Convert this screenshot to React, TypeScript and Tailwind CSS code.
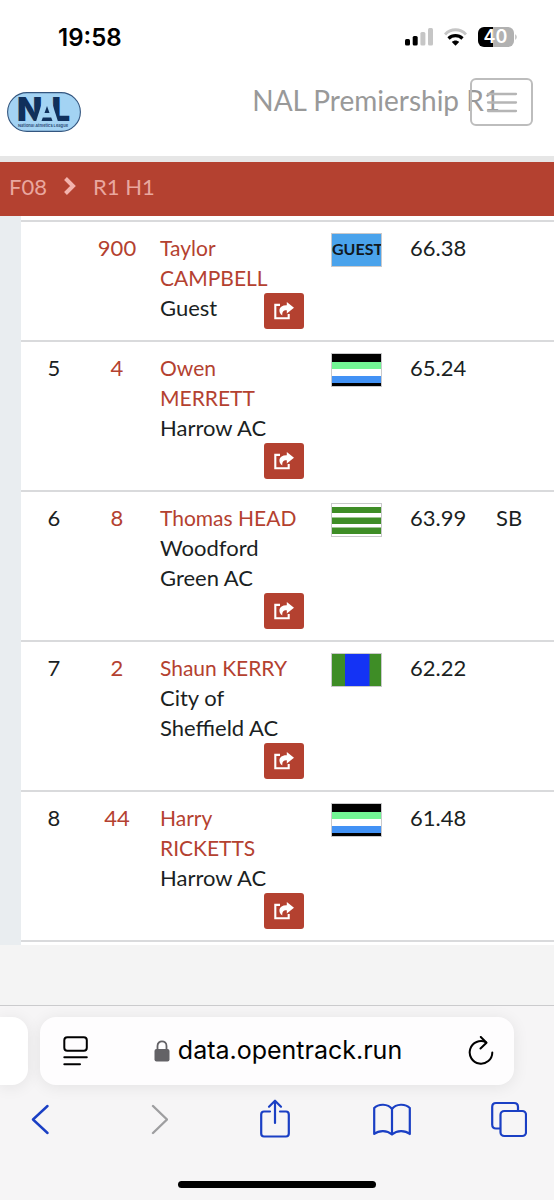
import React from "react";

type Athlete = {
  pos: string;
  bib: string;
  name: string[];
  club: string[];
  flag: "guest" | "harrow" | "woodford" | "sheffield";
  result: string;
  note?: string;
};

const athletes: Athlete[] = [
  { pos: "", bib: "900", name: ["Taylor", "CAMPBELL"], club: ["Guest"], flag: "guest", result: "66.38" },
  { pos: "5", bib: "4", name: ["Owen", "MERRETT"], club: ["Harrow AC"], flag: "harrow", result: "65.24" },
  { pos: "6", bib: "8", name: ["Thomas HEAD"], club: ["Woodford", "Green AC"], flag: "woodford", result: "63.99", note: "SB" },
  { pos: "7", bib: "2", name: ["Shaun KERRY"], club: ["City of", "Sheffield AC"], flag: "sheffield", result: "62.22" },
  { pos: "8", bib: "44", name: ["Harry", "RICKETTS"], club: ["Harrow AC"], flag: "harrow", result: "61.48" },
];

function Logo() {
  return (
    <svg className="block overflow-visible" width="74" height="40" viewBox="0 0 74 40" role="img" aria-label="National Athletics League">
      <rect x="0.6" y="0.6" width="72.8" height="38.8" rx="19.4" fill="#a3d3f3" stroke="#34567f" strokeWidth="1.1" />
      <g fontFamily="Inter, sans-serif" fontWeight="900" fontSize="33" fill="#10305c">
        <text x="10" y="29">N</text>
        <text x="44.500" y="29">L</text>
      </g>
      <path d="M37 4.500H43L51 29.500H29Z" fill="#a3d3f3" />
      <path d="M40 14 42.500 21H37.500ZM35.800 25.500H44.200L45.500 29H34.500Z" fill="#10305c" />
      <text x="11" y="34.500" fontFamily="Inter, sans-serif" fontWeight="700" fontSize="4" fill="#34567f">National Athletics League</text>
    </svg>
  );
}

function Flag({ kind }: { kind: Athlete["flag"] }) {
  return (
    <svg className="block" width="51" height="34" viewBox="0 0 51 34" role="img" aria-label={kind + " colours"}>
      {kind === "guest" && (
        <>
          <rect width="51" height="34" fill="#4aa3ec" />
          <text x="1" y="21.500" fontFamily="Lato, sans-serif" fontWeight="700" fontSize="16" fill="#111820">GUEST</text>
        </>
      )}
      {kind === "harrow" && (
        <>
          <rect width="51" height="34" fill="#000" />
          <rect y="9" width="51" height="7" fill="#72f594" />
          <rect y="16" width="51" height="7" fill="#fff" />
          <rect y="23" width="51" height="7" fill="#4292f5" />
        </>
      )}
      {kind === "woodford" && (
        <>
          <rect width="51" height="34" fill="#fff" />
          <path d="M0 4h51v6H0zM0 14.500h51v6.500H0zM0 24.500h51v6.500H0z" fill="#3e8d26" />
        </>
      )}
      {kind === "sheffield" && (
        <>
          <rect width="51" height="34" fill="#3e8d26" />
          <rect x="14" width="24.500" height="34" fill="#1433f5" />
        </>
      )}
      <rect x="0.5" y="0.5" width="50" height="33" fill="none" stroke="#c9c9cb" />
    </svg>
  );
}

function ShareButton({ label }: { label: string }) {
  return (
    <button type="button" aria-label={label} className="ml-auto flex h-9 w-10 items-center justify-center rounded-[3px] bg-[#b44130]">
      <svg width="20" height="18" viewBox="0 0 20 18" fill="none">
        <path d="M6 2.900H1.300V16.300H14.700V12" stroke="#fff" strokeWidth="2.100" />
        <path d="M12.800 0 20 5.800 12.800 11.600V8.200C9.500 8 8 9.500 8.300 13.600 3.800 10.500 4 3 12.800 3.200Z" fill="#fff" />
      </svg>
    </button>
  );
}

function Lines({ lines }: { lines: string[] }) {
  return (
    <>
      {lines.map((line) => (
        <span key={line} className="block whitespace-nowrap">{line}</span>
      ))}
    </>
  );
}

function StatusBar() {
  return (
    <div className="flex h-[74px] items-center justify-between pr-[37px] pl-[58px]">
      <span className="pt-0.5 font-[Inter] text-2xl font-semibold text-black">19:58</span>
      <div className="flex items-center gap-[11px]">
        <svg width="28" height="18" viewBox="0 0 28 18" aria-label="Signal">
          <rect x="0" y="11" width="5" height="6.500" rx="1.500" fill="#000" />
          <rect x="7.700" y="8" width="5" height="9.500" rx="1.500" fill="#000" />
          <rect x="15.400" y="4" width="5" height="13.500" rx="1.500" fill="#c6c6c6" />
          <rect x="23" y="0" width="5" height="17.500" rx="1.500" fill="#c6c6c6" />
        </svg>
        <svg width="23" height="18" viewBox="0 0 23 18" fill="none" aria-label="Wi-Fi">
          <path d="M1 6.500C7 0.300 16 0.300 22 6.500" stroke="#c6c6c6" strokeWidth="3" />
          <path d="M4.500 10.500C8.500 6.700 14.500 6.700 18.500 10.500" stroke="#000" strokeWidth="3.200" />
          <path d="M7.800 14C10 12 13 12 15.200 14L11.500 17.700Z" fill="#000" />
        </svg>
        <svg width="39" height="20" viewBox="0 0 39 20" aria-label="Battery 40 percent">
          <path d="M15 0H6A6 6 0 0 0 0 6V14A6 6 0 0 0 6 20H15Z" fill="#000" />
          <path d="M15 0H30A6 6 0 0 1 36 6V14A6 6 0 0 1 30 20H15Z" fill="#b1b1b1" />
          <path d="M37.300 7Q40 10 37.300 13Z" fill="#b1b1b1" />
          <text x="17.500" y="16.300" textAnchor="middle" fontFamily="Inter, sans-serif" fontWeight="600" fontSize="18" fill="#fff">40</text>
        </svg>
      </div>
    </div>
  );
}

function BrowserBar() {
  return (
    <footer className="flex grow flex-col border-t border-[#cbcbcd] bg-[#f6f5f6] pt-[11px]">
      <div className="flex gap-3">
        <div className="h-17 w-7 rounded-r-2xl bg-white shadow-[0_2px_16px_rgba(0,0,0,0.08)]" />
        <div className="mr-10 flex h-17 grow items-center justify-between rounded-2xl bg-[#fefdfe] pr-5 pl-[23px] shadow-[0_2px_16px_rgba(0,0,0,0.08)]">
          <button type="button" aria-label="Page menu">
            <svg width="25" height="30" viewBox="0 0 25 30" fill="none" stroke="#000" strokeWidth="2" strokeLinecap="round">
              <rect x="1.300" y="1.300" width="22.500" height="13.500" rx="3" />
              <path d="M1.300 21.300H23.800M1.300 28.300H17" />
            </svg>
          </button>
          <div className="flex items-center gap-2">
            <svg width="16" height="22" viewBox="0 0 16 22" fill="none">
              <rect x="0.500" y="9" width="15" height="12.500" rx="2" fill="#636266" />
              <path d="M3.500 10V6C3.500-0.200 12.500-0.200 12.500 6V10" stroke="#636266" strokeWidth="1.800" />
            </svg>
            <span className="font-[Inter] text-[25px] text-black">data.opentrack.run</span>
          </div>
          <button type="button" aria-label="Reload">
            <svg width="26" height="30" viewBox="0 0 26 30" fill="none" stroke="#000" strokeWidth="2" strokeLinecap="round" strokeLinejoin="round">
              <path d="M18 6.300A11.300 11.300 0 1 0 24.300 16.500" />
              <path d="M12.800 1 18.500 6.700 12.500 12.500" />
            </svg>
          </button>
        </div>
      </div>
      <nav className="flex items-center justify-between pt-[14px] pr-[26px] pl-[21px]" aria-label="Browser">
        <button type="button" aria-label="Back" className="flex w-[38px] justify-center">
          <svg width="18" height="40" viewBox="0 0 18 40" fill="none" stroke="#1a3fc4" strokeWidth="2.400" strokeLinecap="round" strokeLinejoin="round">
            <path d="M16.500 7 2 20.500 16.500 34" />
          </svg>
        </button>
        <button type="button" aria-label="Forward" className="flex w-[38px] justify-end pr-2">
          <svg width="18" height="40" viewBox="0 0 18 40" fill="none" stroke="#9e9ea0" strokeWidth="2.400" strokeLinecap="round" strokeLinejoin="round">
            <path d="M3 7 17 20.500 3 34" />
          </svg>
        </button>
        <button type="button" aria-label="Share" className="flex w-[38px] justify-center">
          <svg width="30" height="40" viewBox="0 0 30 40" fill="none" stroke="#1a3fc4" strokeWidth="2.200" strokeLinecap="round" strokeLinejoin="round">
            <path d="M10 12.500H4Q1.200 12.500 1.200 15.500V34.500Q1.200 37.500 4 37.500H26Q28.800 37.500 28.800 34.500V15.500Q28.800 12.500 26 12.500H20" />
            <path d="M15 24V2M9 7.700 15 1.700 21 7.700" />
          </svg>
        </button>
        <button type="button" aria-label="Bookmarks" className="flex w-[38px] justify-center">
          <svg width="38" height="40" viewBox="0 0 38 40" fill="none" stroke="#1a3fc4" strokeWidth="2.200" strokeLinejoin="round">
            <path d="M19 10C15 4.500 5.500 4.500 1.200 9V35C6 31 14 31 19 35.500 24 31 32 31 36.800 35V9C32.500 4.500 23 4.500 19 10ZM19 10V35" />
          </svg>
        </button>
        <button type="button" aria-label="Tabs" className="flex w-[38px] justify-center">
          <svg width="36" height="40" viewBox="0 0 36 40" fill="none" stroke="#1a3fc4" strokeWidth="2.200">
            <path d="M9 29.500H5Q1.200 29.500 1.200 25.500V8Q1.200 4 5 4H23Q27 4 27 8V12" />
            <rect x="9.500" y="12" width="25.500" height="25" rx="3.800" />
          </svg>
        </button>
      </nav>
      <div className="mx-auto mt-auto mb-3 h-[7px] w-[198px] rounded-full bg-black" />
    </footer>
  );
}

export default function App() {
  return (
    <div className="flex min-h-screen flex-col bg-[#f4f4f4] font-[Lato,sans-serif] text-[#1b1f23]">
      <header className="border-b-[6px] border-[#e6e6e6] bg-white pb-6">
        <StatusBar />
        <div className="relative flex items-start justify-between pt-1 pr-[22px] pl-[7px]">
          <a href="#home" className="mt-3.5 block"><Logo /></a>
          <h1 className="mt-1 mr-8 text-[28px] leading-9 text-[#999]">NAL Premiership R1</h1>
          <button type="button" aria-label="Menu" className="absolute top-1 right-[21px] flex h-12 w-[63px] items-center justify-center rounded-md border-2 border-[#bdbdbd]">
            <svg width="32" height="21" viewBox="0 0 32 21" stroke="#b5b5b5" strokeWidth="2.300" strokeLinecap="round">
              <path d="M2 2H30M2 10.500H30M2 19H30" />
            </svg>
          </button>
        </div>
      </header>

      <nav aria-label="Breadcrumb" className="flex h-[54px] items-center gap-[17px] bg-[#b44130] pb-1.5 pl-[9px] text-[22px] text-[#e9a79f]">
        <a href="#f08">F08</a>
        <svg width="12" height="18" viewBox="0 0 12 18" fill="none" stroke="#f3b3ad" strokeWidth="4">
          <path d="M1.500 1.500 9 9 1.500 16.500" />
        </svg>
        <a href="#r1h1">R1 H1</a>
      </nav>

      <main className="bg-[#e9edf0] pl-[21px]">
        <div className="bg-white pt-1 pb-[3px]">
          <table className="w-full table-fixed border-b-2 border-[#d9dadc] text-[22px] leading-[30px]">
            <colgroup>
              <col className="w-[66px]" />
              <col className="w-[60px]" />
              <col className="w-[172px]" />
              <col className="w-[78px]" />
              <col className="w-[87px]" />
              <col />
            </colgroup>
            <tbody>
              {athletes.map((a) => (
                <tr key={a.bib} className="border-t-2 border-[#d9dadc] align-top">
                  <td className="pt-[11px] text-center">{a.pos}</td>
                  <td className="pt-[11px] text-center"><a href="#bib" className="text-[#b44130]">{a.bib}</a></td>
                  <td className="py-[11px] pr-[15px] pl-[13px] text-[21px]">
                    <a href="#athlete" className="text-[#b44130]"><Lines lines={a.name} /></a>
                    <div className={a.flag === "guest" ? "flex" : ""}>
                      <div className="text-[22px]"><Lines lines={a.club} /></div>
                      <ShareButton label={"Share " + a.name.join(" ")} />
                    </div>
                  </td>
                  <td className="px-3 pt-[11px]"><Flag kind={a.flag} /></td>
                  <td className="px-[13px] pt-[11px]">{a.result}</td>
                  <td className="px-3 pt-[11px]">{a.note}</td>
                </tr>
              ))}
            </tbody>
          </table>
        </div>
      </main>
      <div className="h-15" />
      <BrowserBar />
    </div>
  );
}
